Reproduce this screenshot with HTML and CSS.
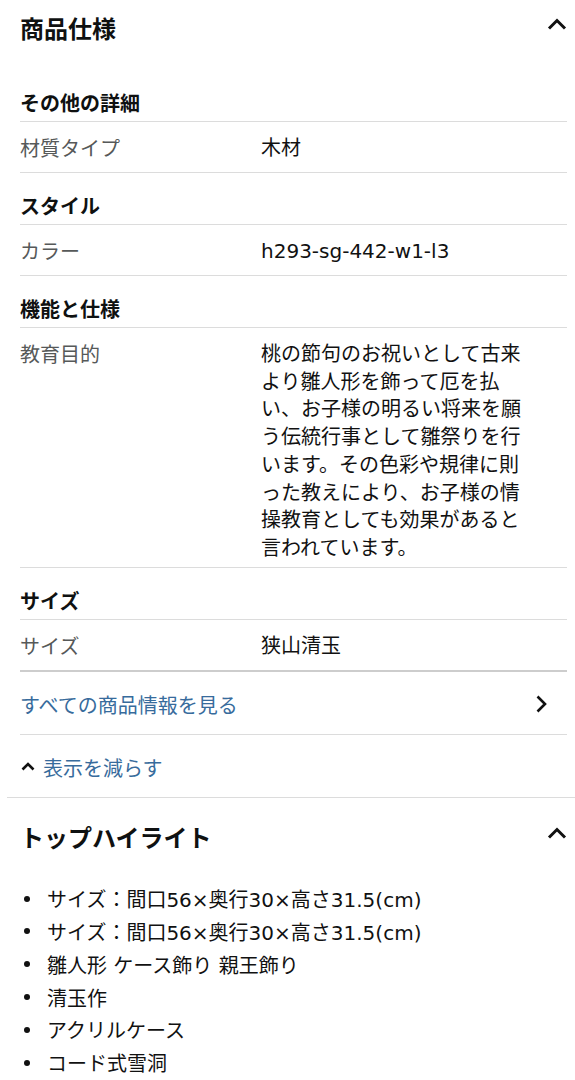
FILE: index.html
```
<html>
<head>
<meta charset="utf-8">
<title>商品仕様</title>
<link rel="stylesheet" href="styles.css">
</head>
<body>
<div class="page">

  <section class="panel">
    <div class="panel-head">
      <h2>商品仕様</h2>
      <svg class="chev-up" width="20" height="12" viewBox="0 0 20 12"><polyline points="2,10.5 10,2.5 18,10.5"/></svg>
    </div>

    <div class="spec-group">その他の詳細</div>
    <div class="spec-row">
      <span class="spec-label">材質タイプ</span>
      <span class="spec-value">木材</span>
    </div>

    <div class="spec-group">スタイル</div>
    <div class="spec-row">
      <span class="spec-label">カラー</span>
      <span class="spec-value">h293-sg-442-w1-l3</span>
    </div>

    <div class="spec-group">機能と仕様</div>
    <div class="spec-row multi">
      <span class="spec-label">教育目的</span>
      <span class="spec-value">桃の節句のお祝いとして古来より雛人形を飾って厄を払い、お子様の明るい将来を願う伝統行事として雛祭りを行います。その色彩や規律に則った教えにより、お子様の情操教育としても効果があると言われています。</span>
    </div>

    <div class="spec-group">サイズ</div>
    <div class="spec-row last">
      <span class="spec-label">サイズ</span>
      <span class="spec-value">狭山清玉</span>
    </div>

    <a class="all-link" href="#">
      <span>すべての商品情報を見る</span>
      <svg class="chev-right" width="13" height="20" viewBox="0 0 13 20"><polyline points="2.5,2.5 10,10 2.5,17.5"/></svg>
    </a>

    <a class="less-link" href="#">
      <svg class="chev-small" width="14" height="9" viewBox="0 0 14 9"><polyline points="1.5,7.5 7,2 12.5,7.5"/></svg>
      <span>表示を減らす</span>
    </a>
  </section>

  <section class="panel highlights">
    <div class="panel-head">
      <h2>トップハイライト</h2>
      <svg class="chev-up" width="20" height="12" viewBox="0 0 20 12"><polyline points="2,10.5 10,2.5 18,10.5"/></svg>
    </div>
    <ul class="bullets">
      <li>サイズ：間口56×奥行30×高さ31.5(cm)</li>
      <li>サイズ：間口56×奥行30×高さ31.5(cm)</li>
      <li>雛人形 ケース飾り 親王飾り</li>
      <li>清玉作</li>
      <li>アクリルケース</li>
      <li>コード式雪洞</li>
    </ul>
  </section>

</div>
</body>
</html>
```

FILE: styles.css
```
body {
  margin:0;
  font-family:"DejaVu Sans", "Noto Sans CJK JP", sans-serif;
  font-size:20px;
  color:#0f1111;
  background:#fff;
}

.page {
  padding-left:7px;
}

.panel {
  padding:0 8px 0 13px;
  border-bottom:1px solid #dcdcdc;
}

.panel-head {
  display:flex;
  justify-content:space-between;
  align-items:center;
  padding:13px 0 27px;
}

.panel-head h2 {
  margin:0;
  font-size:24px;
  line-height:30px;
  font-weight:bold;
  font-family:"Noto Sans CJK JP", sans-serif;
}

.chev-up {
  margin-bottom:8px;
}

.chev-up polyline,
.chev-right polyline,
.chev-small polyline {
  fill:none;
  stroke:#111;
  stroke-width:3;
}

.chev-right polyline,
.chev-small polyline {
  stroke-width:2.6;
}

.spec-group {
  padding:19px 0 4px;
  line-height:28px;
  font-weight:bold;
  font-family:"Noto Sans CJK JP", sans-serif;
  border-bottom:1px solid #dcdcdc;
}

.spec-row {
  display:grid;
  grid-template-columns:241px 270px;
  padding:13px 0 9px;
  line-height:28px;
  border-bottom:1px solid #dcdcdc;
}

.spec-row.multi {
  padding-bottom:4px;
}

.spec-row.last {
  border-bottom:2px solid #cdcdcd;
}

.spec-label {
  color:#565959;
}

.spec-value {
  color:#111;
  line-height:27.7px;
}

.all-link,
.less-link {
  display:flex;
  align-items:center;
  line-height:28px;
  padding:20px 0 14px;
  color:#376b9c;
  text-decoration:none;
}

.all-link {
  justify-content:space-between;
  border-bottom:1px solid #dcdcdc;
}

.chev-right {
  margin:0 19px 4px 0;
}

.chev-small {
  margin:0 8px 4px 1px;
}

.panel.highlights {
  border-bottom:none;
}

.highlights .panel-head {
  padding:24px 0 0;
}

.bullets {
  list-style:none;
  margin:32.6px 0 0;
  padding:0;
}

.bullets li {
  display:flex;
  align-items:center;
  line-height:32.8px;
  color:#111;
}

.bullets li:before {
  content:"";
  flex-shrink:0;
  width:6px;
  height:6px;
  border-radius:50%;
  background:#111;
  margin:0 17px 4px 4px;
}
```
